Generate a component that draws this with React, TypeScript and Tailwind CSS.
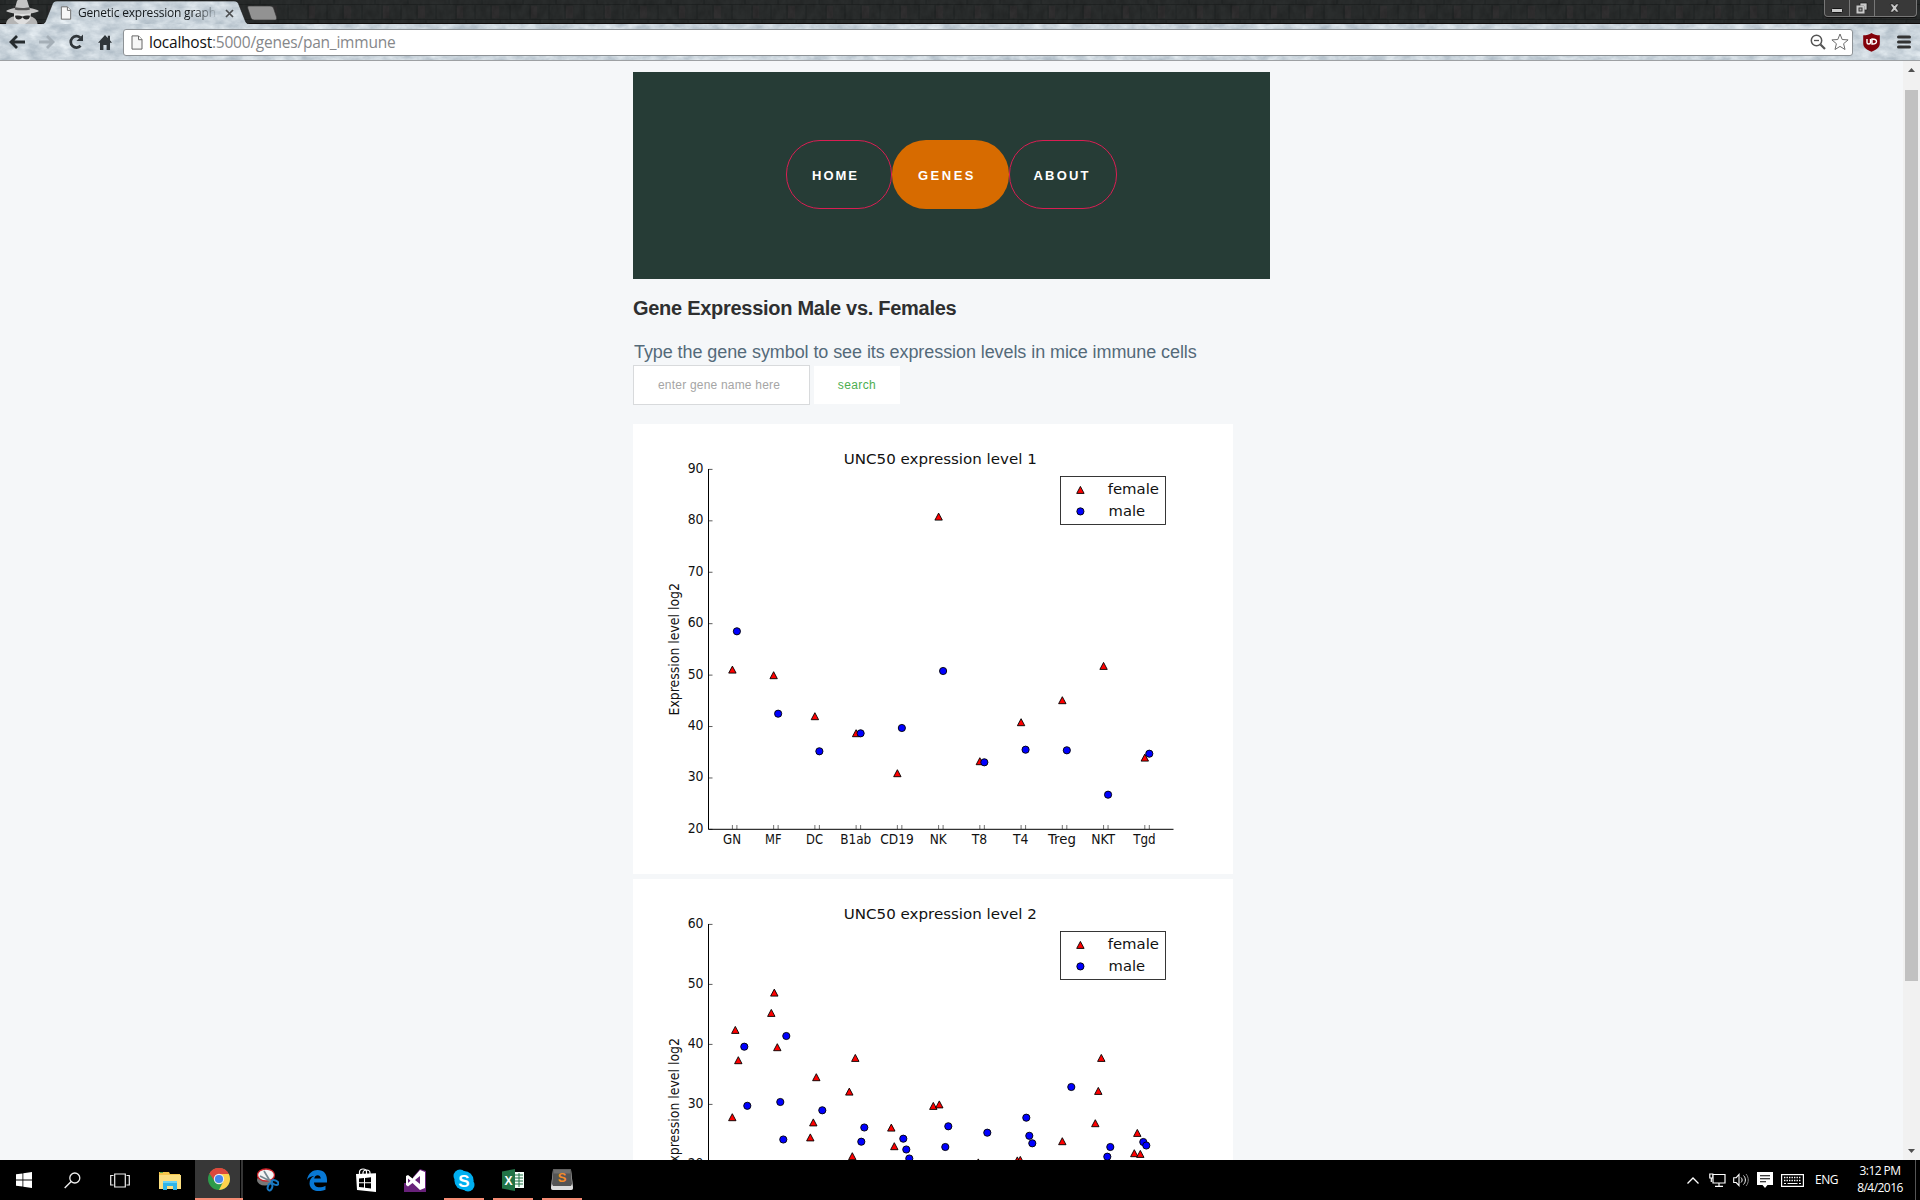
import React from "react";

type Point = [number, number];

const CELLS = ["GN", "MF", "DC", "B1ab", "CD19", "NK", "T8", "T4", "Treg", "NKT", "Tgd"];
const LABEL_WIDTHS = [18, 16.5, 17, 31, 33.5, 17, 15.5, 15.5, 28, 24, 22.5];
const CELL_STEP = 41.24;
const FIRST_X = 99.4;

const LEVEL1_FEMALE: Point[] = [245.7, 251.3, 292.3, 309.3, 349.3, 92.7, 337.3, 298.3, 276.3, 242, 333.7].map(
  (y, i) => [FIRST_X + i * CELL_STEP, y] as Point
);
const LEVEL1_MALE: Point[] = [207.3, 289.7, 327.3, 309.3, 304, 247, 338.3, 325.7, 326.3, 370.7, 329.7].map(
  (y, i) => [FIRST_X + 4.5 + i * CELL_STEP, y] as Point
);

const LEVEL2_FEMALE: Point[] = [
  [102.3, 151], [105.3, 181.3], [99.3, 238.3], [141.3, 113.7], [138.3, 134], [144.3, 168.3], [183.3, 198.3],
  [180.3, 243.5], [177.3, 258.5], [222.3, 179], [216.3, 212.7], [219.3, 277.3], [258.3, 248.7], [261.3, 267.3],
  [300.3, 227], [306.3, 225.5], [345.3, 283.5], [384.3, 281.5], [387.3, 281], [429.3, 262.3], [468.3, 179],
  [465.3, 212], [462.3, 244.3], [504.3, 254], [501.3, 274.3], [507.3, 275],
];
const LEVEL2_MALE: Point[] = [
  [111.3, 167.7], [114.3, 226.8], [153.3, 157], [147.3, 223], [150.3, 260.5], [189.3, 231.3], [231.3, 248.5],
  [228.3, 262.7], [270.3, 259.7], [273.3, 270.5], [276.3, 279.5], [315.3, 247.3], [312.3, 268], [354.3, 253.7],
  [393.3, 238.7], [396.3, 256.8], [399.3, 264.3], [438.3, 208], [477.3, 268], [474.3, 277.7], [510.3, 263], [513.3, 266.5],
];

function Triangle({ x, y }: { x: number; y: number }) {
  return <path d={`M${x} ${y - 3.6}L${x + 3.7} ${y + 3.4}H${x - 3.7}Z`} fill="#f00" stroke="#000" strokeWidth=".9" />;
}

function Dot({ x, y }: { x: number; y: number }) {
  return <circle cx={x} cy={y} r="3.6" fill="#00f" stroke="#000" strokeWidth=".9" />;
}

function ScatterChart({ title, ticks, female, male }: { title: string; ticks: number[]; female: Point[]; male: Point[] }) {
  const step = 360 / (ticks.length - 1);
  return (
    <svg viewBox="0 0 600 450" className="block h-[450px] w-[600px] shrink-0 bg-white font-['DejaVu_Sans',sans-serif]">
      <text x="210.800" y="40" fontSize="14.6" textLength="193" lengthAdjust="spacingAndGlyphs" fill="#111">{title}</text>
      <text transform="translate(45.500 291.5) rotate(-90)" fontSize="13.2" textLength="132.5" lengthAdjust="spacingAndGlyphs" fill="#111">
        Expression level log2
      </text>
      {ticks.map((t, i) => (
        <g key={t}>
          <text x="70.5" y={48.9 + i * step} textAnchor="end" fontSize="13.2" textLength={t ? 15.8 : undefined} lengthAdjust="spacingAndGlyphs" fill="#111">{t}</text>
          <path d={`M75.5 ${45.4 + i * step}h4`} stroke="#333" strokeWidth=".8" />
        </g>
      ))}
      {CELLS.map((c, i) => (
        <g key={c}>
          <path d={`M${FIRST_X + i * CELL_STEP} 405v-4m4.5 4v-4`} stroke="#333" strokeWidth=".7" />
          <text x={FIRST_X - 0.4 + i * CELL_STEP} y="420.4" textAnchor="middle" fontSize="13.2" textLength={LABEL_WIDTHS[i]} lengthAdjust="spacingAndGlyphs" fill="#111">{c}</text>
        </g>
      ))}
      <path d="M75.5 45V405.3H540.5" fill="none" stroke="#000" strokeWidth="1" />
      {female.map(([x, y], i) => <Triangle key={i} x={x} y={y} />)}
      {male.map(([x, y], i) => <Dot key={i} x={x} y={y} />)}
      <rect x="427.5" y="52.5" width="105" height="48" fill="#fff" stroke="#222" strokeWidth=".9" />
      <Triangle x={447.4} y={66} />
      <Dot x={447.4} y={87.4} />
      <text x="474.700" y="70" fontSize="14.6" textLength="51.300" lengthAdjust="spacingAndGlyphs" fill="#111">female</text>
      <text x="475.6" y="92" fontSize="14.6" textLength="36.500" lengthAdjust="spacingAndGlyphs" fill="#111">male</text>
    </svg>
  );
}

function BrickTexture() {
  return (
    <svg className="absolute inset-0 h-full w-full">
      <defs>
        <pattern id="brick" width="74" height="24" patternUnits="userSpaceOnUse">
          <path d="M0 4.5H74M0 19.5H74M12 5v14M31 5v14M47 5v14M66 5v14M5 0v4M38 0v4M22 20v4M56 20v4" stroke="#1a1d1d" strokeWidth="1" />
          <path d="M13 6h6v12h-6zM48 6h7v12h-7z" fill="#343132" />
        </pattern>
        <filter id="grain"><feTurbulence type="fractalNoise" baseFrequency=".15 .09" numOctaves="3" seed="4" /><feColorMatrix values="0 0 0 0 0  0 0 0 0 0  0 0 0 0 0  .9 0 0 0 -.28" /></filter>
      </defs>
      <rect width="100%" height="100%" fill="#2a2d2d" />
      <rect width="100%" height="100%" fill="url(#brick)" opacity=".6" />
      <rect width="100%" height="100%" filter="url(#grain)" opacity=".35" />
      <rect y="23" width="100%" height="1" fill="#110d0c" />
    </svg>
  );
}

function MarbleFilter() {
  return (
    <filter id="marble" x="0" y="0" width="100%" height="100%" colorInterpolationFilters="sRGB">
      <feTurbulence type="fractalNoise" baseFrequency=".07 .12" numOctaves="4" seed="12" />
      <feColorMatrix values=".3 0 0 0 .64  .27 0 0 0 .695  .24 0 0 0 .74  0 0 0 0 1" />
    </filter>
  );
}

function Page({ className }: { className: string }) {
  return (
    <svg viewBox="0 0 12 15" className={className}>
      <path d="M1 .9h6.5L11 4.5v9.6H1z" fill="#f6f6f6" stroke="#666" />
      <path d="M7.5 1v3.7H11" fill="#fff" stroke="#666" />
    </svg>
  );
}

function TabStrip() {
  return (
    <div className="relative h-6">
      <BrickTexture />
      <svg className="absolute left-0 top-0 h-6 w-[290px]" viewBox="0 0 290 24">
        <defs>
          <clipPath id="tab"><path d="M41 24c3 0 4-1 5-4l6-15c1-3 2-4 5-4H234c3 0 4 1 5 4l6 15c1 3 2 4 5 4z" /></clipPath>
        </defs>
        <g clipPath="url(#tab)"><rect width="290" height="24" filter="url(#marble)" /></g>
        <path d="M41 24c3 0 4-1 5-4l6-15c1-3 2-4 5-4H234c3 0 4 1 5 4l6 15c1 3 2 4 5 4" fill="none" stroke="#111" strokeWidth=".6" />
        <path d="M249 6h21c2 0 3 1 3.500 2l3 9c.5 2 0 3-2 3h-20c-2 0-3-1-3.500-2l-3-9c-.5-2-.5-3 1-3z" fill="#929292" stroke="#303030" strokeWidth=".6" />
        <path d="M6 24c.5-4 3-6 7-7.500l18 0c4 1.500 6 3.500 6.500 7.500z" fill="#b5b5b5" />
        <path d="M14 13h17l-1 7-5 4h-6l-5-4z" fill="#dedede" />
        <path d="M15 15.800c3-.5 5-.3 7.500.6 2.500-.9 4.500-1.100 7.500-.6-.3 2.800-1.500 3.700-3.700 3.700-2 0-3-1-3.800-2.200-.8 1.200-1.800 2.200-3.800 2.200-2.200 0-3.400-.9-3.700-3.700z" fill="#292929" />
        <path d="M15 8L17 1c.4-1 1.500-1.500 3-1h7l2.500 8c4 .5 7.500 1.500 9.500 3-3 2-10 3-16.500 3S9 13 6 11c2-1.500 5-2.500 9-3z" fill="#c4c4c4" />
        <path d="M15.200 7.200l-.5 2.200c4 1.200 11 1.200 15.300 0l-.7-2.200c-4 1-10 1-14.100 0z" fill="#555" />
      </svg>
      <div className="relative flex h-6 items-center pl-[60px] pt-[2px]">
        <Page className="h-[14px] w-3" />
        <span className="ml-1.5 w-[138px] whitespace-nowrap bg-linear-to-r from-[#15191b] from-85% to-[#15191b]/10 bg-clip-text font-['Open_Sans',sans-serif] text-[12px] leading-5 tracking-[-0.200px] text-transparent">
          Genetic expression graph
        </span>
        <svg viewBox="0 0 9 9" className="ml-[9px] size-[9px]"><path d="M1 1l7 7M8 1L1 8" stroke="#4b4d4f" strokeWidth="1.700" /></svg>
      </div>
      <div className="absolute right-[3px] top-0 flex h-[17px] w-[93px] overflow-hidden rounded-b border border-t-0 border-[#777] bg-[#393939] shadow-[0_1px_0_#111]">
        <div className="flex w-[25px] items-center justify-center border-r border-[#777]">
          <svg viewBox="0 0 12 5" className="mt-1 h-[5px] w-3"><rect x=".5" y=".5" width="11" height="4" rx="1" fill="#c9c9c9" stroke="#151515" /></svg>
        </div>
        <div className="flex w-[25px] items-center justify-center border-r border-[#777]">
          <svg viewBox="0 0 12 12" className="size-3"><path d="M4 1h7v7H8V4H4z" fill="#c9c9c9" stroke="#151515" strokeWidth=".7" /><rect x="1.500" y="4.500" width="6" height="6" fill="#333" stroke="#c9c9c9" strokeWidth="2" /><path d="M3.500 6.500h2v2h-2z" fill="#aaa" /></svg>
        </div>
        <div className="flex flex-1 items-center justify-center pr-0.5">
          <svg viewBox="0 0 11 10" className="h-2.5 w-[11px]"><path d="M1 1h3l1.500 2L7 1h3L7.300 5 10 9H7L5.500 7 4 9H1l2.700-4z" fill="#c9c9c9" stroke="#111" strokeWidth=".6" /></svg>
        </div>
      </div>
    </div>
  );
}

function Toolbar() {
  return (
    <div className="relative h-[37px] border-b border-[#9da0a3]">
      <svg className="absolute inset-0 h-full w-full"><defs><MarbleFilter /></defs><rect width="100%" height="100%" filter="url(#marble)" /></svg>
      <div className="relative flex h-9 items-center">
        <svg viewBox="0 0 16 14" className="ml-[9px] h-[14px] w-4"><path d="M8 1L2 7l6 6M2 7h14" fill="none" stroke="#262b2e" strokeWidth="2.800" /></svg>
        <svg viewBox="0 0 16 14" className="ml-[14px] h-[14px] w-4"><path d="M8 1l6 6-6 6M14 7H0" fill="none" stroke="#a5afb7" strokeWidth="2.800" /></svg>
        <svg viewBox="0 0 16 16" className="ml-[13px] size-4"><path d="M12.600 11.800A5.700 5.700 0 1 1 12.200 3.600" fill="none" stroke="#30363a" strokeWidth="2.700" /><path d="M15 .5v6.500H8.500z" fill="#30363a" /></svg>
        <svg viewBox="0 0 14 15" className="ml-[14px] h-[15px] w-[14px]"><path d="M7 0l2.800 3V.8H12v4.500L14 7.800h-2V15H8.600v-5H5.400v5H2V7.800H0z" fill="#30363a" /></svg>
        <div className="ml-[11px] flex h-[27px] w-[1730px] items-center rounded-[3px] border border-[#8d9296] bg-white">
          <Page className="ml-[7px] h-[15px] w-3" />
          <span className="ml-[6px] mt-[-1px] whitespace-nowrap font-['Open_Sans',sans-serif] text-[15.500px] leading-6 tracking-[-0.220px] text-[#85878a]">
            <span className="text-[#111]">localhost</span>:5000/genes/pan_immune
          </span>
          <svg viewBox="0 0 16 16" className="ml-auto size-4"><circle cx="6.500" cy="6.500" r="5.200" fill="none" stroke="#555" strokeWidth="1.500" /><path d="M4 6.500h5" stroke="#555" strokeWidth="1.300" /><path d="M10.500 10.500L15 15" stroke="#555" strokeWidth="2.200" /></svg>
          <svg viewBox="0 0 18 18" className="ml-[5px] mr-[3px] size-[18px]"><path d="M9 1l2.200 5.500 5.900.4-4.500 3.800 1.400 5.800L9 13.400l-5 3.100 1.400-5.800L.9 6.900l5.900-.4z" fill="#fff" stroke="#6b6b6b" strokeLinejoin="round" /></svg>
        </div>
        <svg viewBox="0 0 17 19" className="ml-[10px] h-[19px] w-[17px]"><path d="M8.500 0c2 1.500 5 2.300 8.300 2.300v8.200c0 4-4 6.500-8.300 8.300C4.200 17 .2 14.500.2 10.500V2.300C3.500 2.300 6.500 1.500 8.500 0z" fill="#830009" /><path d="M4 6v3.500c0 2 3.500 2 3.500 0V6M9 6v5c3 .3 4.500-1 4.500-2.600C13.500 6.500 11.500 6 9 6z" fill="none" stroke="#fff" strokeWidth="1.400" /></svg>
        <svg viewBox="0 0 14 14" className="ml-[17px] h-[14px] w-[14px]"><path d="M1.500 2h11M1.500 7h11M1.500 12h11" stroke="#333" strokeWidth="3" strokeLinecap="round" /></svg>
      </div>
    </div>
  );
}

function SiteNav() {
  return (
    <nav className="flex h-[207px] w-[637px] items-start justify-center bg-[#263c36] pt-[68px] font-['Liberation_Sans',sans-serif] text-[13px] font-bold text-white">
      <a className="flex h-[69px] w-[106px] rounded-[34px] border border-[#d91e53] pl-[25px] leading-[69px] tracking-[2px]">HOME</a>
      <a className="flex h-[69px] w-[116.500px] rounded-[34px] bg-[#d76b00] pl-[26px] leading-[71px] tracking-[2.500px]">GENES</a>
      <a className="flex h-[69px] w-[108.500px] rounded-[34px] border border-[#d91e53] pl-[24px] leading-[69px] tracking-[2.200px]">ABOUT</a>
    </nav>
  );
}

function Content() {
  return (
    <div className="flex h-[1099px] overflow-hidden bg-[#f5f7f9]">
      <main className="ml-[633px] w-[637px] pt-[11px] font-['Liberation_Sans',sans-serif]">
        <SiteNav />
        <h1 className="mt-[15px] whitespace-nowrap text-[20px] font-bold leading-[28px] tracking-[-0.280px] text-[#2e2f30]">Gene Expression Male vs. Females</h1>
        <p className="mt-[16px] h-[27px] whitespace-nowrap pl-px text-[18px] leading-[28px] tracking-[-0.080px] text-[#546a79]">Type the gene symbol to see its expression levels in mice immune cells</p>
        <div className="flex h-10 items-center gap-1">
          <div className="flex h-10 w-[177px] items-center border border-[#d8dadc] bg-white pl-[24px] text-[12px] text-[#a5a5a5]">
            <span className="whitespace-nowrap tracking-[0.200px]">enter gene name here</span>
          </div>
          <button className="h-[38px] w-[86px] bg-white text-[12px] tracking-[0.400px] text-[#4cae50]">search</button>
        </div>
        <div className="mt-[19px] flex flex-col gap-[5px]">
          <ScatterChart title="UNC50 expression level 1" ticks={[90, 80, 70, 60, 50, 40, 30, 20]} female={LEVEL1_FEMALE} male={LEVEL1_MALE} />
          <ScatterChart title="UNC50 expression level 2" ticks={[60, 50, 40, 30, 20, 10, 0]} female={LEVEL2_FEMALE} male={LEVEL2_MALE} />
        </div>
      </main>
      <div className="ml-auto flex w-[17px] flex-col items-center bg-[#f1f1f1]">
        <svg viewBox="0 0 7 4" className="mt-[7px] h-1 w-[7px]"><path d="M3.500 0L7 4H0z" fill="#505050" /></svg>
        <div className="mt-[18px] h-[891px] w-[13px] bg-[#c1c1c1]" />
        <svg viewBox="0 0 7 4" className="mb-[7px] mt-auto h-1 w-[7px]"><path d="M3.500 4L7 0H0z" fill="#505050" /></svg>
      </div>
    </div>
  );
}

function Slot({ children, w = "w-[49px]", line = false }: { children: React.ReactNode; w?: string; line?: boolean }) {
  return (
    <div className={`relative flex h-10 shrink-0 items-center justify-center ${w}`}>
      {children}
      {line && <div className="absolute bottom-0 left-[5px] h-0.5 w-10 bg-[#f58b74]" />}
    </div>
  );
}

function Taskbar() {
  return (
    <div className="flex h-10 bg-black text-white">
      <Slot w="w-12"><svg viewBox="0 0 16 16" className="size-4"><path d="M0 2.300l6.500-.9v6.100H0zM7.300 1.300L16 0v7.500H7.300zM0 8.400h6.500v6.200L0 13.700zM7.300 8.400H16V16l-8.700-1.300z" fill="#fff" /></svg></Slot>
      <Slot w="w-12"><svg viewBox="0 0 17 17" className="size-[17px]"><circle cx="10.800" cy="6" r="5" fill="none" stroke="#eee" strokeWidth="1.300" /><path d="M7.200 9.600L.7 16" stroke="#eee" strokeWidth="1.400" /></svg></Slot>
      <Slot w="w-12"><svg viewBox="0 0 20 15" className="h-[15px] w-5"><path d="M4.700 1h10.600v13H4.700zM3.500 2.500H.7v9.500h2.800M16.500 2.500h2.800v9.500h-2.800" fill="none" stroke="#eee" strokeWidth="1.200" /></svg></Slot>
      <Slot w="w-[51px]"><svg viewBox="0 0 22 19" className="h-[19px] w-[22px]"><path d="M0 1h10l1 2h10v15H0z" fill="#f5c64b" /><path d="M0 4h22v14H0z" fill="#fbdf80" /><path d="M1 1h3v1H1z" fill="#57a84a" /><path d="M4 10h14v9h-4v-4H8v4H4z" fill="#2eb5e8" /><path d="M4 10h14v2H4z" fill="#68d3f5" /></svg></Slot>
      <div className="relative flex w-12 items-center justify-center border-b-2 border-[#f58b74] bg-[#373737]">
        <svg viewBox="0 0 22 22" className="size-[22px]"><circle cx="11" cy="11" r="11" fill="#2d9b4b" /><path d="M11 11L1.500 5.500A11 11 0 0 1 20.500 5.500z" fill="#dc493d" /><path d="M11 6h9.800A11 11 0 0 1 11 22L15.500 13z" fill="#fcd24c" /><path d="M1.500 5.500A11 11 0 0 1 20.800 6H11l-4.500 7z" fill="#dc493d" /><circle cx="11" cy="11" r="5.200" fill="#eee" /><circle cx="11" cy="11" r="4.100" fill="#4587ee" /></svg>
        <div className="absolute right-0 top-0 h-full w-[3px] border-l border-black bg-[#353535]" />
      </div>
      <Slot><svg viewBox="0 0 22 24" className="h-6 w-[22px]"><ellipse cx="8" cy="12" rx="8" ry="5.500" fill="#777" /><ellipse cx="9" cy="7" rx="8.500" ry="6" fill="#f4f4f4" stroke="#cd242b" strokeWidth="1.300" /><path d="M7 3l6 10M3 8l12 6" stroke="#758891" strokeWidth="1.700" /><ellipse cx="13" cy="19" rx="2.200" ry="3.500" transform="rotate(18 13 19)" fill="none" stroke="#1878c2" strokeWidth="2" /><ellipse cx="18" cy="14.500" rx="3.600" ry="2.100" transform="rotate(25 18 14.500)" fill="none" stroke="#1878c2" strokeWidth="2" /></svg></Slot>
      <Slot><svg viewBox="0 0 20 21" className="h-[21px] w-5"><path d="M0 10C1 3 6 0 10.500 0 17 0 20 4 20 10v2.500H7c.3 6 7 5.500 11.500 3.200v4C12 22.500 3 21.500 2.500 13.500c0-4 2-6.500 4.800-7.500C4.500 6 1.500 7.500 0 10zM7.200 8.500h6.600C13.600 4 7.800 4 7.200 8.500z" fill="#0878d5" /></svg></Slot>
      <Slot><svg viewBox="0 0 22 24" className="h-6 w-[22px]"><path d="M4.500 7V4c0-4 7-4 7 0v3M8 7V5c0-4 7-4 7 0v2" fill="none" stroke="#fff" strokeWidth="1.200" /><path d="M1 6l20-.8V24L2 22z" fill="#fff" /><path d="M4 10.500l5-.5v4.300H4zM10 10l6-.7v5h-6zM4 15.300h5v4.300l-5-.5zM10 15.300h6v5.200l-6-.8z" fill="#000" /></svg></Slot>
      <Slot><svg viewBox="0 0 22 23" className="h-[23px] w-[22px]"><path d="M0 14h22v9H0zM16 0l6 2v14H9V8z" fill="#68217a" /><path d="M16 1l5 2v16l-5 2-7.500-7-4.500 3.500L2 16V7l2-1 4.500 3.500z" fill="#fff" /><path d="M16 7v8l-5-4zM4 9.500v4.500l2.500-2.300z" fill="#68217a" /></svg></Slot>
      <Slot line><svg viewBox="0 0 22 23" className="h-[23px] w-[22px] font-['Liberation_Sans',sans-serif]"><circle cx="7" cy="7" r="6.500" fill="#00aff0" /><circle cx="15" cy="16" r="6.500" fill="#00aff0" /><circle cx="11" cy="11.500" r="9.600" fill="#00aff0" /><text x="11" y="17.500" textAnchor="middle" fontSize="17" fontWeight="bold" fill="#fff">S</text></svg></Slot>
      <Slot line><svg viewBox="0 0 22 22" className="size-[22px] font-['Liberation_Sans',sans-serif]"><path d="M12 3h10v16H12z" fill="#f5fff9" /><path d="M13 6h8M13 9h8M13 12h8M13 15h8M17 4v14" stroke="#217346" /><path d="M0 2.500L13 0v22L0 19.500z" fill="#217346" /><text x="6.500" y="15.500" textAnchor="middle" fontSize="12" fontWeight="bold" fill="#fff">X</text></svg></Slot>
      <Slot line><svg viewBox="0 0 22 21" className="mb-0.5 h-[21px] w-[22px] font-['Liberation_Sans',sans-serif]"><path d="M2 1h18l2 17c0 2 0 3-2 3H2c-2 0-2-1-2-3z" fill="#ddd" /><path d="M2 0h18l1 15-1 2H2l-1-2z" fill="#555" /><path d="M2.500.5h17v4h-17z" fill="#707070" /><text x="11" y="13" textAnchor="middle" fontSize="13" fontWeight="bold" fill="#f78c27">S</text></svg></Slot>
      <div className="ml-auto flex h-10 items-center font-['Open_Sans',sans-serif]">
        <svg viewBox="0 0 12 7" className="h-[7px] w-3"><path d="M.5 6.500L6 1l5.500 5.500" fill="none" stroke="#fff" strokeWidth="1.300" /></svg>
        <svg viewBox="0 0 17 14" className="ml-[10px] h-[14px] w-[17px]"><path d="M4 1.500h12v8.500H4zM10 10v3M6 13.300h8M.8 1v4h3V1zM2.300 5v4" fill="none" stroke="#fff" strokeWidth="1.200" /></svg>
        <svg viewBox="0 0 16 14" className="ml-[7px] h-[14px] w-4"><path d="M.7 4.700h2.500L6 1.500v11l-2.800-3H.7z" fill="none" stroke="#fff" strokeWidth="1.100" /><path d="M8 4.500c1.500 1.500 1.500 3.500 0 5M10.500 2.500c2.500 2.500 2.500 6.500 0 9" fill="none" stroke="#fff" /><path d="M13 1c3 3.500 3 8.500 0 12" fill="none" stroke="#888" /></svg>
        <svg viewBox="0 0 16 16" className="ml-[8px] size-4"><path d="M0 0h16v13h-5.500L8 16l-2.500-3H0z" fill="#fff" /><path d="M3 3.700h10M3 6.700h10M3 9.700h6" stroke="#000" strokeWidth="1.100" /></svg>
        <svg viewBox="0 0 23 13" className="ml-[8px] h-[13px] w-[23px]"><rect x=".6" y=".6" width="21.800" height="11.800" fill="none" stroke="#fff" strokeWidth="1.200" /><path d="M3 3.500h17M3 6.500h17" stroke="#fff" strokeWidth="1.300" strokeDasharray="1.400 1.100" /><path d="M3 9.500h2m1.500 0h10m1.500 0h2" stroke="#fff" /></svg>
        <span className="ml-[11px] w-[23px] whitespace-nowrap text-[12px] tracking-[-0.500px]">ENG</span>
        <div className="ml-[18px] flex w-[48px] flex-col items-center whitespace-nowrap pb-0.5 text-[12px] leading-[17px] tracking-[-0.550px]">
          <span>3:12 PM</span><span>8/4/2016</span>
        </div>
        <div className="ml-[11px] mr-1 h-10 w-px bg-[#555]" />
      </div>
    </div>
  );
}

export default function App() {
  return (
    <div className="flex h-[1200px] w-[1920px] flex-col overflow-hidden">
      <TabStrip />
      <Toolbar />
      <Content />
      <Taskbar />
    </div>
  );
}
